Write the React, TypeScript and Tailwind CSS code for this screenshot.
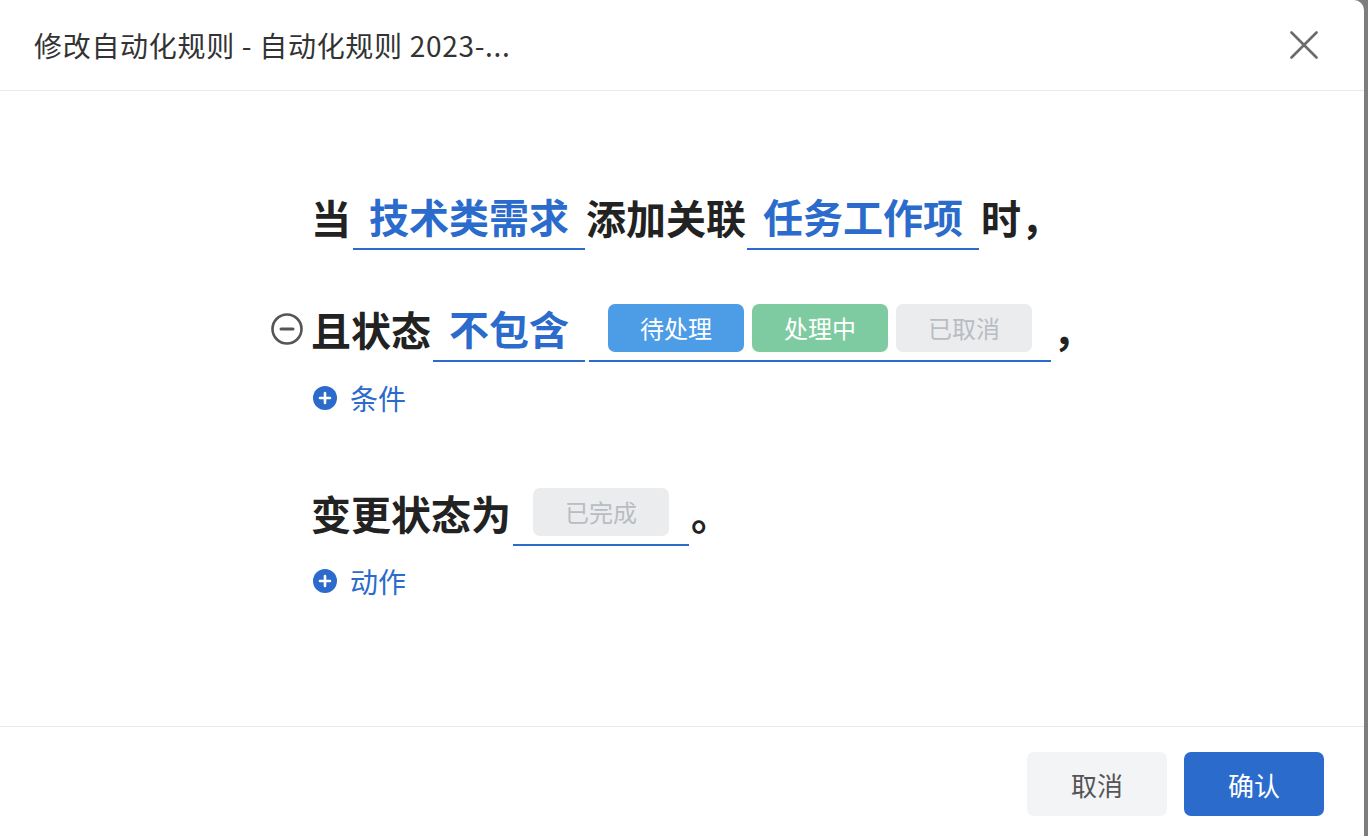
const BLUE = 'text-[#2a6bcc]';

const Tag = ({ label, tone }: { label: string; tone: 'blue' | 'green' | 'gray' }) => {
  const cls =
    tone === 'blue'
      ? 'bg-[#4d9de6] text-white'
      : tone === 'green'
      ? 'bg-[#7ecba1] text-white'
      : 'bg-[#ebecee] text-[#b9bcc2]';
  return (
    <span className={`w-[136px] h-[48px] rounded-[7px] flex items-center justify-center text-[24px] ${cls}`}>
      {label}
    </span>
  );
};

const Field = ({ children, className = '' }: { children: React.ReactNode; className?: string }) => (
  <div className={`h-[66px] flex items-center border-b-2 border-[#2a6bcc] ${className}`}>{children}</div>
);

const AddLink = ({ label }: { label: string }) => (
  <div className="h-[32px] flex items-center gap-[13px] pl-[2px]">
    <svg width="24" height="24" viewBox="0 0 24 24">
      <circle cx="12" cy="12" r="12" fill="#2a6bcc" />
      <path d="M12 7v10M7 12h10" stroke="#fff" strokeWidth="2.6" strokeLinecap="round" />
    </svg>
    <span className={`text-[28px] leading-none ${BLUE}`}>{label}</span>
  </div>
);

export default function App() {
  return (
    <div
      className="w-[1368px] h-[836px] bg-[#7d7d7d] overflow-hidden"
      style={{ fontFamily: '"Noto Sans CJK SC", "Noto Sans", sans-serif' }}
    >
      <div className="w-[1364px] h-[836px] bg-white rounded-tr-[10px] flex flex-col">
        {/* header */}
        <div className="h-[91px] shrink-0 flex items-center justify-between pl-[34px] pr-[46px] border-b border-[#e8e9eb]">
          <h1 className="text-[28px] text-[#333] leading-none tracking-[0.7px]">修改自动化规则 - 自动化规则 2023-...</h1>
          <svg width="28" height="28" viewBox="0 0 28 28">
            <path d="M1.5 1.5l25 25M26.5 1.5l-25 25" stroke="#6b6b6b" strokeWidth="2.6" strokeLinecap="round" />
          </svg>
        </div>

        {/* body */}
        <div className="flex-1 pt-[93px] pl-[311px] text-[40px] leading-none text-[#222]">
          <div className="flex items-center">
            <span className="font-bold">当</span>
            <Field className="px-[16px] ml-[2px]">
              <span className={`font-bold ${BLUE}`}>技术类需求</span>
            </Field>
            <span className="font-bold ml-[1px]">添加关联</span>
            <Field className="px-[16px] ml-[1px]">
              <span className={`font-bold ${BLUE}`}>任务工作项</span>
            </Field>
            <span className="font-bold ml-[2px]">时，</span>
          </div>

          <div className="flex items-center mt-[46px] relative">
            <svg className="absolute left-[-41px] top-[16px]" width="34" height="34" viewBox="0 0 34 34">
              <circle cx="17" cy="17" r="14.5" fill="none" stroke="#555" strokeWidth="2.6" />
              <path d="M11 17h12" stroke="#555" strokeWidth="3" strokeLinecap="round" />
            </svg>
            <span className="font-bold">且状态</span>
            <Field className="px-[16px] ml-[2px]">
              <span className={`font-bold ${BLUE}`}>不包含</span>
            </Field>
            <Field className="px-[19px] gap-[8px] ml-[4px]">
              <Tag label="待处理" tone="blue" />
              <Tag label="处理中" tone="green" />
              <Tag label="已取消" tone="gray" />
            </Field>
            <span className="font-bold ml-[2px]">，</span>
          </div>

          <div className="mt-[20px]">
            <AddLink label="条件" />
          </div>

          <div className="flex items-center mt-[66px]">
            <span className="font-bold">变更状态为</span>
            <Field className="px-[20px] ml-[2px]">
              <Tag label="已完成" tone="gray" />
            </Field>
            <span className="font-bold ml-[2px]">。</span>
          </div>

          <div className="mt-[19px]">
            <AddLink label="动作" />
          </div>
        </div>

        {/* footer */}
        <div className="h-[110px] shrink-0 border-t border-[#e8e9eb] flex justify-end items-start gap-[17px] pt-[25px] pr-[40px]">
          <button className="w-[140px] h-[64px] rounded-[7px] bg-[#f3f4f6] text-[#555] text-[26px]">取消</button>
          <button className="w-[140px] h-[64px] rounded-[7px] bg-[#2a6bcc] text-white text-[26px]">确认</button>
        </div>
      </div>
    </div>
  );
}
